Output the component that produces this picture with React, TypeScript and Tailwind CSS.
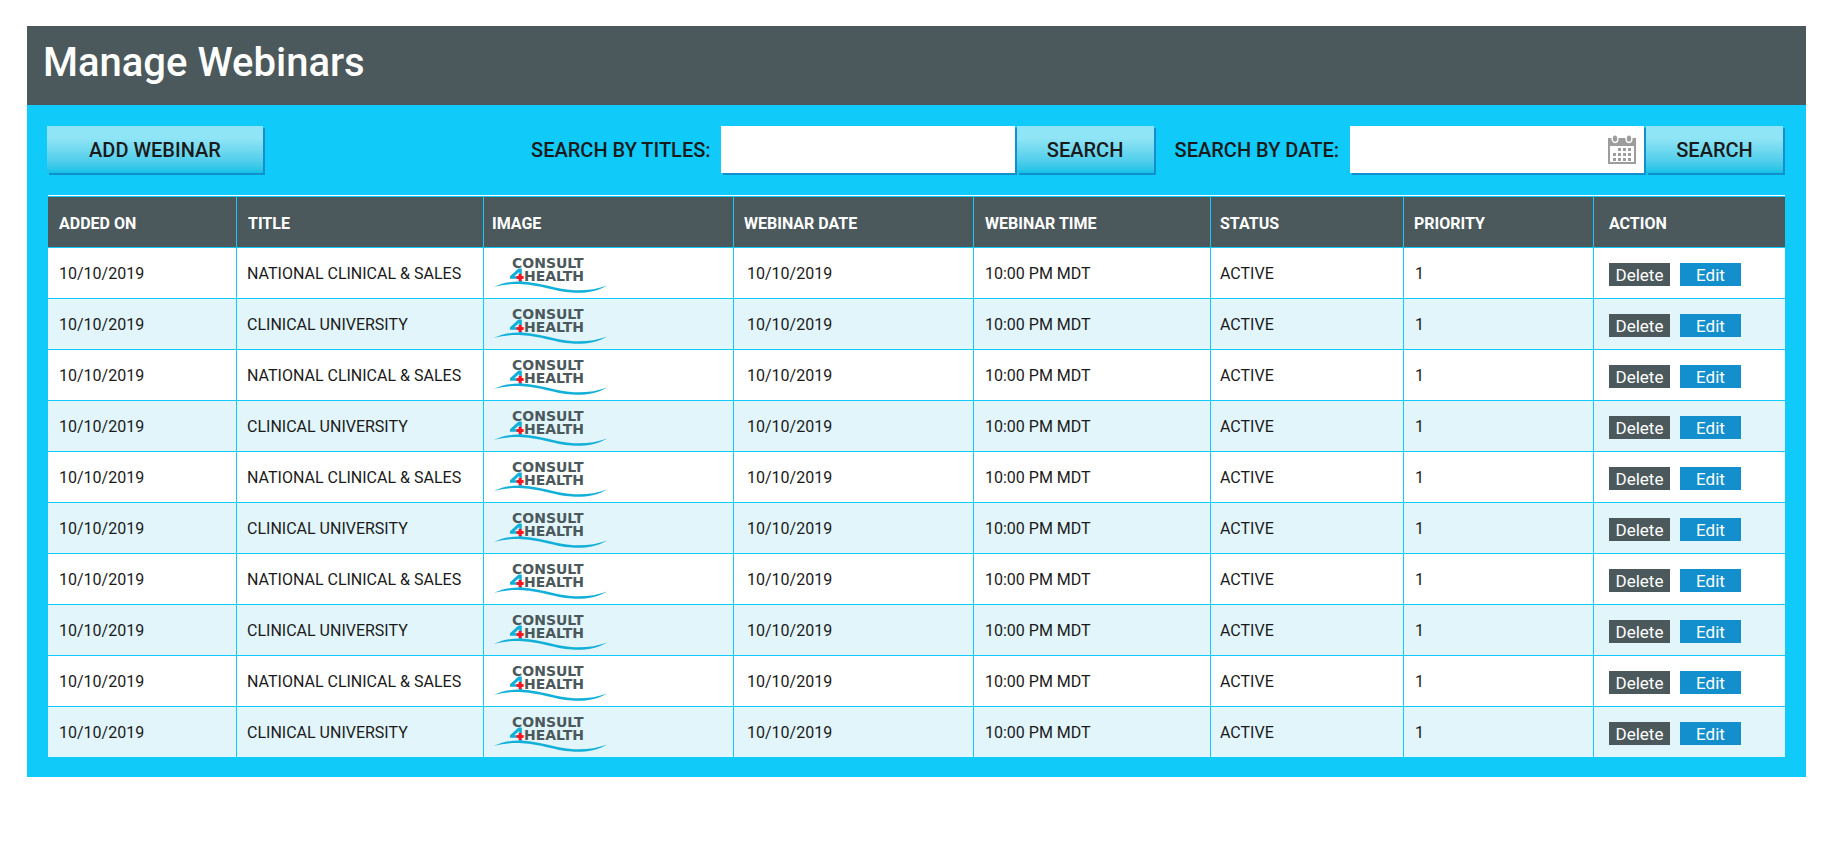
import React from "react";

type Webinar = {
  addedOn: string;
  title: string;
  date: string;
  time: string;
  status: string;
  priority: number;
};

const titles = ["NATIONAL CLINICAL & SALES", "CLINICAL UNIVERSITY"];

const webinars: Webinar[] = Array.from({ length: 10 }, (_, i) => ({
  addedOn: "10/10/2019",
  title: titles[i % 2],
  date: "10/10/2019",
  time: "10:00 PM MDT",
  status: "ACTIVE",
  priority: 1,
}));

const columns = [
  { label: "ADDED ON", width: "w-[188px]", pad: "pl-[11px]" },
  { label: "TITLE", width: "w-[247px]", pad: "pl-[11px]" },
  { label: "IMAGE", width: "w-[250px]", pad: "pl-2" },
  { label: "WEBINAR DATE", width: "w-[240px]", pad: "pl-[10px]" },
  { label: "WEBINAR TIME", width: "w-[237px]", pad: "pl-[11px]" },
  { label: "STATUS", width: "w-[193px]", pad: "pl-[9px]" },
  { label: "PRIORITY", width: "w-[190px]", pad: "pl-[10px]" },
  { label: "ACTION", width: "w-[192px]", pad: "pl-[15px]" },
];

const cell = "border-b border-l border-[#10caf9] first:border-l-0";

function Logo() {
  return (
    <svg width="116" height="44" viewBox="0 -4 116 44" className="block" role="img" aria-label="Consult 4 Health">
      <g fill="#4b595c" fontFamily="'DejaVu Sans', sans-serif" fontWeight="700" fontSize="14">
        <text x="20" y="11.5">CONSULT</text>
        <text x="32" y="25">HEALTH</text>
      </g>
      <path d="M29.8 12.5 H26.5 L18 20.2 V22.8 H25 V20.3 H22.4 L27.2 16 V18.4 H29.8 Z" fill="#12b0d8" />
      <path d="M27 24 H29.8 V27 H27 Z" fill="#12b0d8" />
      <path d="M26.6 18 H29.7 V19.9 H31.6 V23 H29.7 V25 H26.6 V23 H24.6 V19.9 H26.6 Z" fill="#fa1420" />
      <path
        d="M2 30.8 C11 27 20 25 30 25.5 C50 26.6 62 33 82 34.2 C94 34.8 105 33 115.5 29.4 C104 35.8 92 37.4 80 36.6 C62 35.4 48 28.8 30 28.2 C20 27.6 11 28.8 2 30.8 Z"
        fill="#12b0d8"
      />
    </svg>
  );
}

function CalendarIcon() {
  const dots: [number, number][] = [];
  for (let r = 0; r < 3; r++) {
    for (let c = 0; c < 4; c++) {
      if (r > 0 || c > 0) dots.push([5 + c * 5, 13 + r * 5]);
    }
  }
  return (
    <svg width="28" height="29" viewBox="0 0 28 29" className="block" aria-hidden="true">
      <path d="M0 3 H28 V29 H0 Z M2 11 V27 H26 V11 Z" fill="#9d9d9d" fillRule="evenodd" />
      <g fill="#9d9d9d" stroke="#fff" strokeWidth="1.4">
        <ellipse cx="7" cy="3.6" rx="2.9" ry="3.9" />
        <ellipse cx="21" cy="3.6" rx="2.9" ry="3.9" />
      </g>
      {dots.map(([x, y]) => (
        <rect key={`${x}-${y}`} x={x} y={y} width="3" height="3" fill="#9d9d9d" />
      ))}
    </svg>
  );
}

function GradientButton({ className, children }: { className: string; children: React.ReactNode }) {
  return (
    <button
      type="button"
      className={`h-[47px] shrink-0 cursor-pointer bg-linear-to-b from-[#8fe5f5] from-25% to-[#0cc2e6] text-xl font-medium text-[#1a1a1a] shadow-[2px_2px_0_#128fcc] ${className}`}
    >
      {children}
    </button>
  );
}

export default function App() {
  return (
    <div className="min-h-screen bg-white pt-[26px] pr-[30px] pb-20 pl-[27px] font-['Roboto',sans-serif] text-[#1a1a1a]">
      <main className="bg-[#10caf9] pb-5">
        <header className="bg-[#4b595c] px-4 pt-[13px] pb-[18px]">
          <h1 className="text-[40px] leading-[48px] font-medium text-white">Manage Webinars</h1>
        </header>

        <div className="flex flex-wrap items-center gap-x-[21px] gap-y-3 pt-[21px] pr-[23px] pb-[22px] pl-5">
          <GradientButton className="w-[216px]">ADD WEBINAR</GradientButton>

          <form className="ml-auto flex items-center" role="search">
            <label htmlFor="title-search" className="mr-[10px] text-xl font-medium">
              SEARCH BY TITLES:
            </label>
            <input
              id="title-search"
              type="text"
              className="mr-0.5 h-[47px] w-[294px] bg-white px-3 text-base shadow-[2px_2px_0_#128fcc] outline-none"
            />
            <GradientButton className="w-[137px]">SEARCH</GradientButton>
          </form>

          <form className="flex items-center" role="search">
            <label htmlFor="date-search" className="mr-[11px] text-xl font-medium">
              SEARCH BY DATE:
            </label>
            <div className="mr-0.5 flex h-[47px] w-[294px] items-center bg-white pr-2 shadow-[2px_2px_0_#128fcc]">
              <input id="date-search" type="text" className="h-full min-w-0 flex-1 px-3 text-base outline-none" />
              <button type="button" aria-label="Choose date" className="cursor-pointer">
                <CalendarIcon />
              </button>
            </div>
            <GradientButton className="w-[137px]">SEARCH</GradientButton>
          </form>
        </div>

        <div className="mx-[21px] border-t border-white pt-px">
          <table className="w-full table-fixed border-separate border-spacing-0 text-left text-base">
            <thead>
              <tr className="bg-[#4b595c] text-white">
                {columns.map((c) => (
                  <th key={c.label} scope="col" className={`h-[51px] pt-1 font-bold ${cell} ${c.width} ${c.pad}`}>
                    {c.label}
                  </th>
                ))}
              </tr>
            </thead>
            <tbody className="[&>tr:last-child>td]:h-[50px] [&>tr:last-child>td]:border-b-0 [&>tr>td]:pt-0.5">
              {webinars.map((w, i) => (
                <tr key={i} className="bg-white even:bg-[#e1f5fa]">
                  <td className={`h-[51px] ${cell} pl-[11px]`}>{w.addedOn}</td>
                  <td className={`${cell} pl-[10px]`}>{w.title}</td>
                  <td className={`${cell} pl-2`}>
                    <Logo />
                  </td>
                  <td className={`${cell} pl-[13px]`}>{w.date}</td>
                  <td className={`${cell} pl-[11px]`}>{w.time}</td>
                  <td className={`${cell} pl-[9px]`}>{w.status}</td>
                  <td className={`${cell} pl-[11px]`}>{w.priority}</td>
                  <td className={`${cell} pl-[15px]`}>
                    <div className="flex gap-[10px] text-[17px] leading-6 text-white">
                      <button type="button" className="h-[23px] w-[61px] cursor-pointer bg-[#4b595c]">
                        Delete
                      </button>
                      <button type="button" className="h-[23px] w-[61px] cursor-pointer bg-[#128fcc]">
                        Edit
                      </button>
                    </div>
                  </td>
                </tr>
              ))}
            </tbody>
          </table>
        </div>
      </main>
    </div>
  );
}
